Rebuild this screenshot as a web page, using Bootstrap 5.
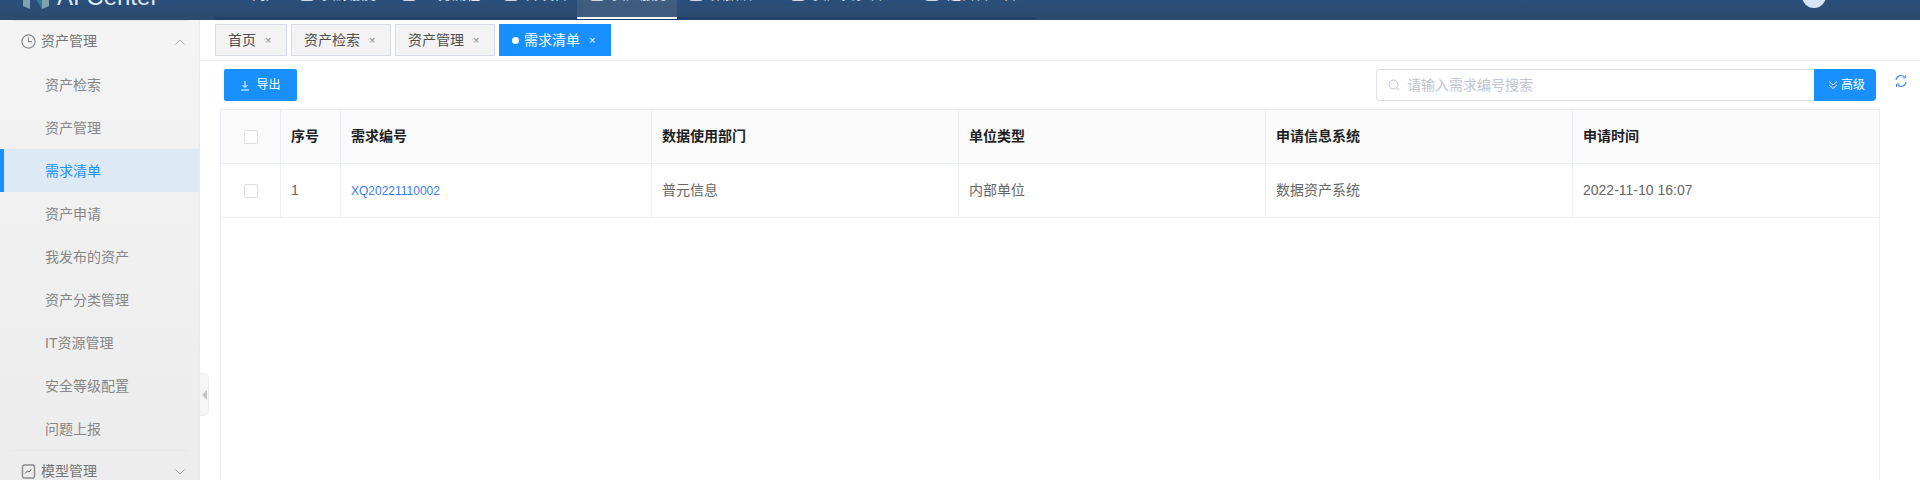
<!doctype html>
<html lang="zh"><head><meta charset="utf-8">
<link rel="stylesheet" href="https://cdn.jsdelivr.net/npm/bootstrap@5.3.0/dist/css/bootstrap.min.css">
<style>
html,body{height:480px;overflow:hidden}
body{font-family:"Liberation Sans","Noto Sans CJK SC",sans-serif;font-size:14px;color:#606266;background:#fff}
.topbar{height:20px;background:linear-gradient(#2a4f7c,#2d4a6c);overflow:hidden;color:#dfe6ee}
.brand{width:215px;flex:none;padding-left:23px;gap:8px;color:#dce7ee;align-items:flex-start}
.brand svg{margin-top:-19px;flex:none}
.brand span{font-size:24px;line-height:24px;margin-top:-15px;white-space:nowrap}
.topnav{height:20px;background:linear-gradient(transparent 17px,#20406c 17px);width:821px;flex:none}
.toptab{height:19px;padding:0 12px;gap:8px;line-height:14px;align-items:flex-start;white-space:nowrap;flex:none}
.toptab>span{margin-top:-13px}
.toptab>b{display:block;width:14px;height:14px;margin-top:-13px;border-radius:3px;background:#cfd8e3}
.toptab.first{padding:0 8px 0 37px}
.toptab.on{background:linear-gradient(#3f5d80,#3f5a7c);border-bottom:2px solid #fff;padding:0 9px 0 13px;margin-left:-3px}
.toptab.last{margin-left:4px}
.avatar{width:24px;height:24px;border-radius:50%;background:#d6e4f5;margin:-16px 94px 0 auto;flex:none}
.side{width:200px;flex:none;background:linear-gradient(#f4f4f4,#ececec);border-right:1px solid #e8eaef;height:460px;overflow:hidden}
.sidehead{height:43px;margin:0 11px 0 13px;border-top:1px solid #e7e7e7;color:#757575;padding:0 3px 1px 8px;gap:5px}
.sideitem{height:43px;line-height:44px;padding-left:45px;color:#868686;display:block;text-decoration:none}
.sideitem.on{background:#dde9f5;color:#1890ff;border-left:4px solid #1890ff;padding-left:41px}
.tabsbar{height:41px;border-bottom:1px solid #e9ebf0;padding:4px 0 0 15px;gap:4px}
.tabx{height:32px;border:1px solid #d8dce5;background:#f3f3f3;color:#4e4e4e;padding:0 15px 0 12px;white-space:nowrap}
.tabx.on{background:#1890ff;border-color:#1890ff;color:#fff}
.tabx i{font-style:normal;font-size:11px;margin-left:9px;width:6px;text-align:center;color:#888;line-height:1;display:block}
.tabx.on i{color:#fff}
.tabdot{width:7px;height:7px;border-radius:50%;background:#fff;margin-right:5px}
.toolrow{height:48px;padding-top:8px}
.export{background:#1890ff;color:#fff;border:0;border-radius:2px;width:73px;height:32px;font-size:12px;margin-left:24px;gap:6px;padding:0}
.search{width:438px;height:32px;border:1px solid #dcdfe6;border-right:0;border-radius:4px 0 0 4px;padding-left:11px;color:#c0c4cc;gap:7px}
.adv{width:62px;height:32px;background:#1890ff;color:#fff;border-radius:0 4px 4px 0;font-size:12px;gap:3px;padding-left:14px}
.refresh{width:44px;padding:5px 0 0 19px;flex:none}
.tbl{margin-left:20px;width:1660px;flex:1;border:1px solid #ebeef5;border-bottom:0}
.datagrid{table-layout:fixed;width:100%;border-collapse:separate;border-spacing:0}
.datagrid th,.datagrid td{border-right:1px solid #ebeef5;border-bottom:1px solid #ebeef5;padding:0 10px;height:54px;vertical-align:middle;font-size:14px}
.datagrid tr>:last-child{border-right:0}
.datagrid th{background:#fafafa;color:#1f1f1f;font-weight:700}
.datagrid td{color:#666}
.datagrid .cen{text-align:center;padding:0}
.cw1,.cw2{width:60px}.cw3{width:311px}.cw4{width:307px}
.cbx{display:inline-block;width:14px;height:14px;border:1px solid #dcdfe6;border-radius:2px;background:#fff;vertical-align:middle}
.linkid{color:#3a7bf0;font-size:12px;text-decoration:none}
.handle{position:absolute;left:200px;top:353px;width:9px;height:43px;background:#f6f6f6;border:1px solid #ececec;border-left:0;border-radius:0 6px 6px 0;z-index:2}
.handle b{border-style:solid;border-width:5px 5px 5px 0;border-color:transparent #c4c4c4 transparent transparent;width:0;height:0}
</style></head><body>
<div class="topbar d-flex">
 <div class="brand d-flex"><svg width="26" height="30" viewBox="0 0 26 30"><path d="M0 5l7-4v27l-7-3zM26 5l-7-4v27l7-3z" fill="#7fa3ac"/><path d="M7 1l12 19v8L7 9z" fill="#2f7f93"/></svg><span>AI Center</span></div>
 <nav class="topnav d-flex">
  <div class="toptab first d-flex"><span>门户</span></div>
  <div class="toptab d-flex"><b></b><span>资源服务</span></div>
  <div class="toptab d-flex"><b></b><span>业务流程</span></div>
  <div class="toptab d-flex"><b></b><span>开发台</span></div>
  <div class="toptab on d-flex"><b></b><span>资产服务</span></div>
  <div class="toptab d-flex"><b></b><span>数据治理</span></div>
  <div class="toptab d-flex"><b></b><span>资产实验管理</span></div>
  <div class="toptab last d-flex"><b></b><span>运营管理台</span></div>
 </nav>
 <div class="avatar"></div>
</div>
<div class="d-flex position-relative" style="height:460px">
 <aside class="side">
  <div class="sidehead d-flex align-items-center"><svg width="15" height="15" viewBox="0 0 15 15" class="flex-shrink-0"><circle cx="7.5" cy="7.5" r="6.6" fill="none" stroke="#8a8a8a" stroke-width="1.2"/><path d="M7.5 3.500v4.200h3.500" fill="none" stroke="#8a8a8a" stroke-width="1.200"/></svg><span class="flex-grow-1">资产管理</span><svg width="10" height="6" viewBox="0 0 10 6"><path d="M.5 5.500L5 1l4.500 4.500" fill="none" stroke="#aaa"/></svg></div>
  <a class="sideitem">资产检索</a><a class="sideitem">资产管理</a><a class="sideitem on">需求清单</a><a class="sideitem">资产申请</a><a class="sideitem">我发布的资产</a><a class="sideitem">资产分类管理</a><a class="sideitem">IT资源管理</a><a class="sideitem">安全等级配置</a><a class="sideitem">问题上报</a>
  <div class="sidehead d-flex align-items-center"><svg width="15" height="15" viewBox="0 0 15 15" class="flex-shrink-0"><rect x="1.500" y="1" width="12" height="13" rx="2" fill="none" stroke="#8a8a8a" stroke-width="1.400"/><path d="M4 9.500l2.500-2.500 1.500 1 2.500-3" fill="none" stroke="#666"/></svg><span class="flex-grow-1">模型管理</span><svg width="10" height="6" viewBox="0 0 10 6"><path d="M.5.5L5 5l4.500-4.500" fill="none" stroke="#aaa"/></svg></div>
 </aside>
 <div class="handle d-flex align-items-center justify-content-center"><b></b></div>
 <main class="flex-grow-1 d-flex flex-column" style="min-width:0">
  <div class="tabsbar d-flex">
   <div class="tabx d-flex align-items-center">首页<i>×</i></div><div class="tabx d-flex align-items-center">资产检索<i>×</i></div><div class="tabx d-flex align-items-center">资产管理<i>×</i></div><div class="tabx on d-flex align-items-center"><span class="tabdot"></span>需求清单<i>×</i></div>
  </div>
  <div class="toolrow d-flex">
   <button class="export d-flex align-items-center justify-content-center"><svg width="10" height="11" viewBox="0 0 10 11"><path d="M5 1v6M2.500 5L5 7.500 7.500 5M1 10h8" fill="none" stroke="#fff"/></svg>导出</button>
   <div class="ms-auto d-flex">
    <div class="search d-flex align-items-center"><svg width="12" height="12" viewBox="0 0 12 12"><circle cx="5.500" cy="5.500" r="4.500" fill="none" stroke="#c0c4cc"/><path d="M9 9l2 2" stroke="#c0c4cc"/></svg>请输入需求编号搜索</div>
    <div class="adv d-flex align-items-center"><svg width="10" height="10" viewBox="0 0 10 10"><path d="M1 1.500l4 3.500 4-3.500M1 5l4 3.500L9 5" fill="none" stroke="#fff"/></svg>高级</div>
   </div>
   <div class="refresh"><svg class="d-block" width="12" height="14" viewBox="0 0 12 14"><path d="M1 6a5 5 0 0 1 8.500-3M11 8a5 5 0 0 1-8.500 3" fill="none" stroke="#4a90f5" stroke-width="1.200"/><path d="M10.500 1v3h-3M1.500 13v-3h3" fill="none" stroke="#4a90f5"/></svg></div>
  </div>
  <div class="tbl">
   <table class="datagrid"><colgroup><col class="cw1"><col class="cw2"><col class="cw3"><col class="cw4"><col class="cw4"><col class="cw4"><col></colgroup>
   <thead><tr><th class="cen"><span class="cbx"></span></th><th>序号</th><th>需求编号</th><th>数据使用部门</th><th>单位类型</th><th>申请信息系统</th><th>申请时间</th></tr></thead>
   <tbody><tr><td class="cen"><span class="cbx"></span></td><td>1</td><td><a class="linkid">XQ20221110002</a></td><td>普元信息</td><td>内部单位</td><td>数据资产系统</td><td>2022-11-10 16:07</td></tr></tbody></table>
  </div>
 </main>
</div>
<script src="https://cdn.jsdelivr.net/npm/bootstrap@5.3.0/dist/js/bootstrap.bundle.min.js"></script>
</body></html>
